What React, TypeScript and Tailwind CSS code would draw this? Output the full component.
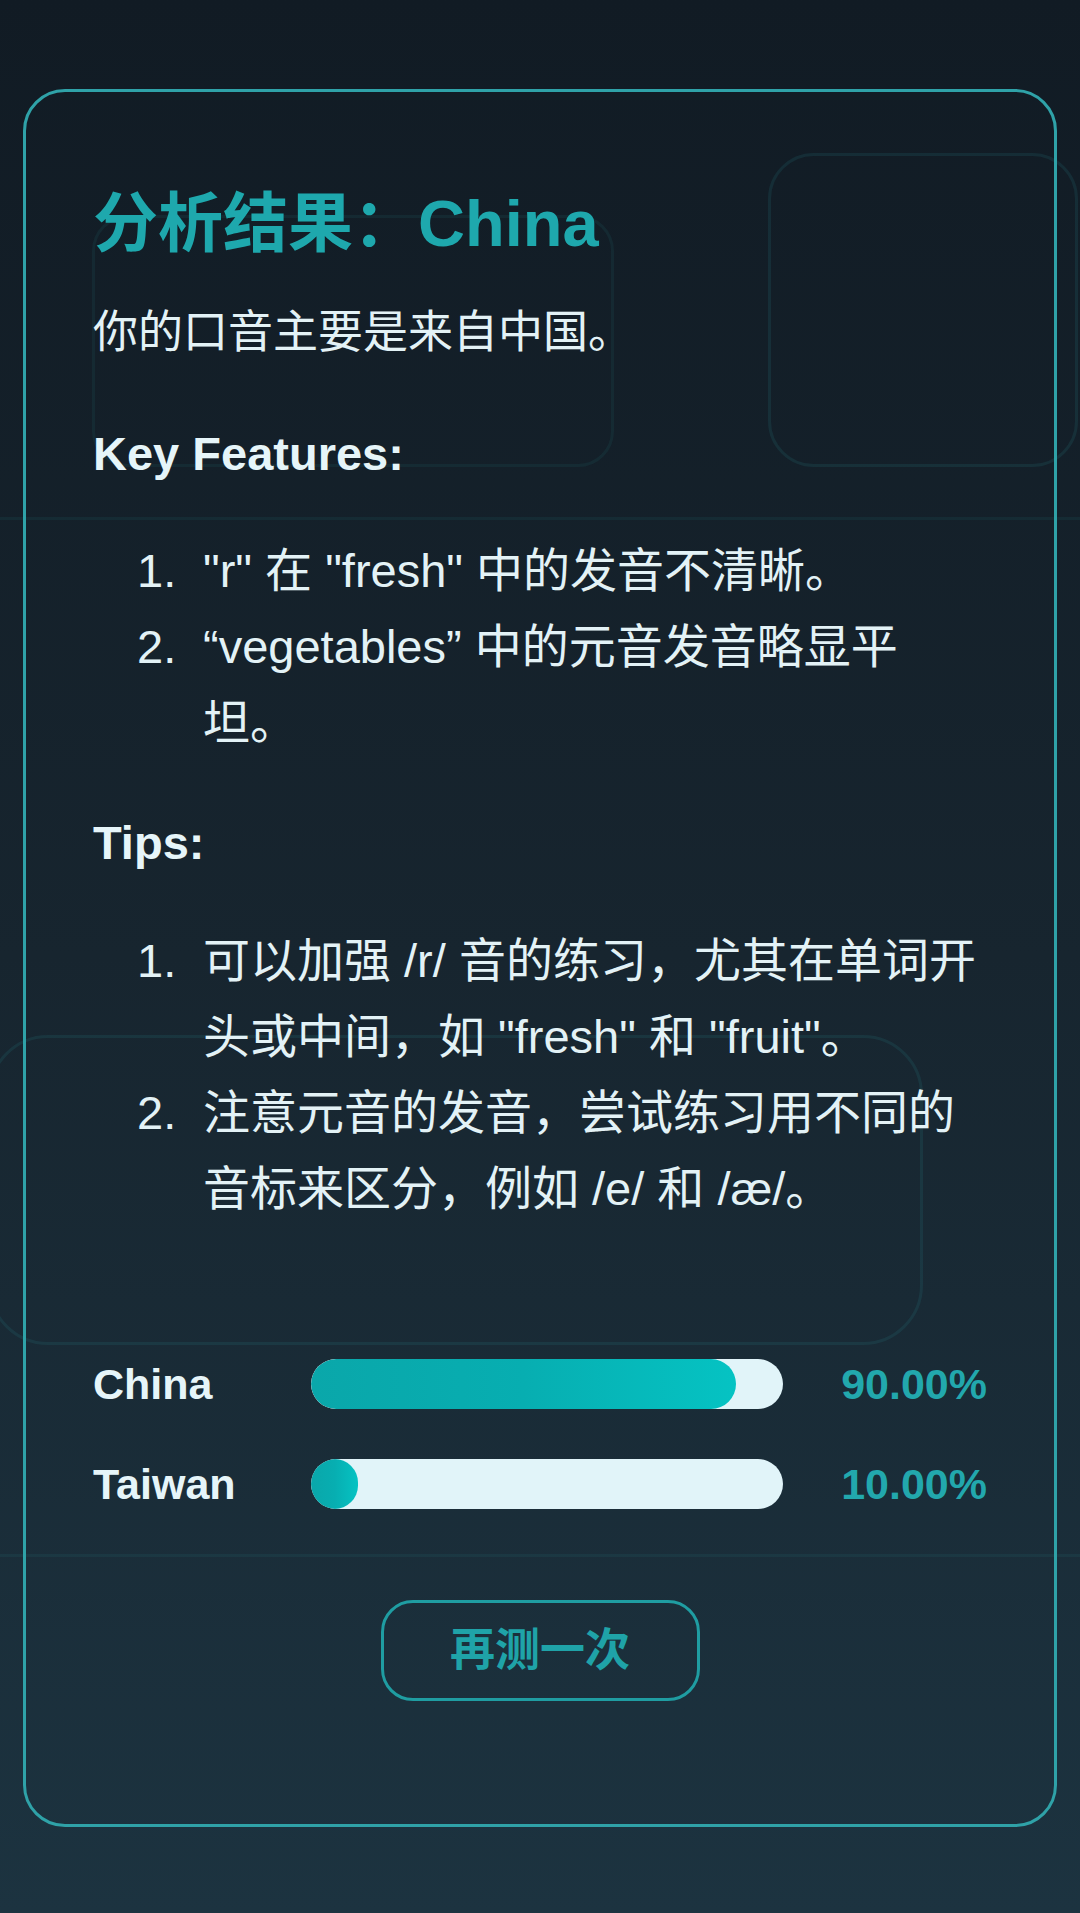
import React from 'react';

const keyFeatures: string[][] = [
  ['"r" 在 "fresh" 中的发音不清晰。'],
  ['“vegetables” 中的元音发音略显平', '坦。'],
];

const tips: string[][] = [
  ['可以加强 /r/ 音的练习，尤其在单词开', '头或中间，如 "fresh" 和 "fruit"。'],
  ['注意元音的发音，尝试练习用不同的', '音标来区分，例如 /e/ 和 /æ/。'],
];

const results = [
  { label: 'China', value: 90 },
  { label: 'Taiwan', value: 10 },
];

const NumberedList = ({ items }: { items: string[][] }) => (
  <ol className="flex flex-col">
    {items.map((lines, i) => (
      <li key={i} className="flex pl-[44px] text-[47px] leading-[76px] text-[#e3f2f6]">
        <span className="w-[66px] shrink-0">{i + 1}.</span>
        <div className="flex flex-col">
          {lines.map((line) => (
            <span key={line} className="whitespace-nowrap">
              {line}
            </span>
          ))}
        </div>
      </li>
    ))}
  </ol>
);

export default function App() {
  return (
    <div className="relative min-h-[1913px] w-[1080px] overflow-hidden bg-gradient-to-b from-[#111b24] via-[#17252f] to-[#1c3340] font-['Liberation_Sans','Noto_Sans_CJK_SC',sans-serif]">
      {/* faint background shapes */}
      <div className="absolute left-[768px] top-[153px] h-[314px] w-[310px] rounded-[46px] border-[3px] border-[#2a8f95]/15" />
      <div className="absolute left-[92px] top-[215px] h-[252px] w-[522px] rounded-[36px] border-[3px] border-[#2a8f95]/10" />
      <div className="absolute left-0 top-[517px] h-[3px] w-full bg-[#2a8f95]/10" />
      <div className="absolute left-[-12px] top-[1035px] h-[310px] w-[935px] rounded-[60px] border-[3px] border-[#2a8f95]/15" />
      <div className="absolute left-0 top-[1554px] h-[3px] w-full bg-[#2a8f95]/10" />

      <section className="relative z-10 mx-[23px] mt-[89px] flex flex-col rounded-[42px] border-[3px] border-[#2fa2a8] px-[67px] pb-[123px] pt-[92px]">
        <h1 className="text-[65px] font-bold leading-[80px] text-[#1ea8ad]">分析结果：China</h1>
        <p className="mt-[31px] text-[45px] leading-[76px] text-[#e3f2f6]">你的口音主要是来自中国。</p>

        <h2 className="mt-[45px] text-[47px] font-bold leading-[76px] text-[#e6f5f9]">Key Features:</h2>
        <div className="mt-[41px]">
          <NumberedList items={keyFeatures} />
        </div>

        <h2 className="mt-[44px] text-[47px] font-bold leading-[76px] text-[#e6f5f9]">Tips:</h2>
        <div className="mt-[42px]">
          <NumberedList items={tips} />
        </div>

        <div className="mt-[125px] flex flex-col gap-[50px]">
          {results.map((r) => (
            <div key={r.label} className="grid h-[50px] grid-cols-[218px_472px_1fr] items-center">
              <span className="text-[43px] font-bold text-[#e6f5f9]">{r.label}</span>
              <div className="h-[50px] w-full overflow-hidden rounded-full bg-[#e1f4f9]">
                <div
                  className="h-full rounded-full bg-gradient-to-r from-[#0aa7aa] via-[#07aeb1] to-[#05c3c3]"
                  style={{ width: `${r.value}%` }}
                />
              </div>
              <span className="text-right text-[43px] font-bold text-[#22a8ad]">{r.value.toFixed(2)}%</span>
            </div>
          ))}
        </div>

        <button
          type="button"
          className="mx-auto mt-[98px] flex h-[101px] w-[319px] items-center justify-center rounded-[32px] border-[3px] border-[#1f9da2] text-[45px] font-bold text-[#1fa3a8]"
        >
          再测一次
        </button>
      </section>
    </div>
  );
}
